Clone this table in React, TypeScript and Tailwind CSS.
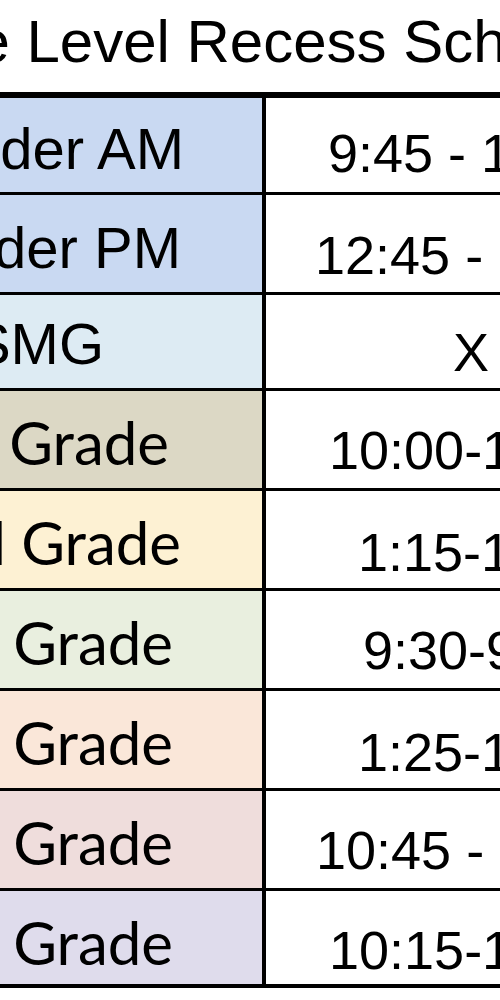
const rows = [
  { label: "Kinder AM", time: "9:45 - 10:05", bg: "bg-[#c9d9f2]", h: "h-[97px]", font: "sans", lpr: "pr-[78px]", lpt: "pt-[22px]", rpl: "pl-[62px]", rpt: "pt-[28px]" },
  { label: "Kinder PM", time: "12:45 - 1:05", bg: "bg-[#c9d9f2]", h: "h-[100px]", font: "sans", lpr: "pr-[81px]", lpt: "pt-[24px]", rpl: "pl-[49px]", rpt: "pt-[33px]" },
  { label: "SMG", time: "X", bg: "bg-[#ddebf3]", h: "h-[96px]", font: "sans", lpr: "pr-[158px]", lpt: "pt-[20px]", rpl: "pl-[187px]", rpt: "pt-[30px]" },
  { label: "1st Grade", time: "10:00-10:15", bg: "bg-[#dcd8c5]", h: "h-[100px]", font: "lato", lpr: "pr-[93px]", lpt: "pt-[21px]", rpl: "pl-[63px]", rpt: "pt-[32px]" },
  { label: "2nd Grade", time: "1:15-1:30", bg: "bg-[#fdf1d3]", h: "h-[100px]", font: "lato", lpr: "pr-[81px]", lpt: "pt-[21px]", rpl: "pl-[92px]", rpt: "pt-[34px]" },
  { label: "3rd Grade", time: "9:30-9:45", bg: "bg-[#e9efdf]", h: "h-[100px]", font: "lato", lpr: "pr-[89px]", lpt: "pt-[21px]", rpl: "pl-[97px]", rpt: "pt-[32px]" },
  { label: "4th Grade", time: "1:25-1:40", bg: "bg-[#fae7d9]", h: "h-[100px]", font: "lato", lpr: "pr-[89px]", lpt: "pt-[21px]", rpl: "pl-[92px]", rpt: "pt-[34px]" },
  { label: "5th Grade", time: "10:45 - 11:00", bg: "bg-[#efdddc]", h: "h-[100px]", font: "lato", lpr: "pr-[89px]", lpt: "pt-[21px]", rpl: "pl-[50px]", rpt: "pt-[32px]" },
  { label: "6th Grade", time: "10:15-10:30", bg: "bg-[#dfdcec]", h: "h-[97px]", font: "lato", lpr: "pr-[89px]", lpt: "pt-[21px]", rpl: "pl-[63px]", rpt: "pt-[32px]" },
]

export default function App() {
  return (
    <div className="w-[500px] h-[1000px] overflow-hidden bg-white text-black">
      {/* Title */}
      <div className="h-[92px] pt-[12px] whitespace-nowrap">
        <div className="ml-[-157px] text-[60px] leading-none font-['Liberation_Sans',Arial,sans-serif]">
          Grade Level Recess Schedule
        </div>
      </div>

      {/* Table */}
      <div className="border-t-[6px] border-black">
        {rows.map((r, i) => (
          <div
            key={r.label}
            className={`flex ${r.h} border-black ${i === rows.length - 1 ? "border-b-4" : "border-b-[3px]"}`}
          >
            <div
              className={`w-[266px] shrink-0 border-r-4 border-black ${r.bg} flex justify-end items-start overflow-hidden whitespace-nowrap ${r.lpr} ${r.lpt}`}
            >
              {r.font === "lato" ? (
                <span className="text-[60px] leading-none font-['Lato',sans-serif]">{r.label}</span>
              ) : (
                <span className="text-[58px] leading-none font-['Liberation_Sans',Arial,sans-serif]">{r.label}</span>
              )}
            </div>
            <div className={`flex-1 overflow-hidden whitespace-nowrap ${r.rpl} ${r.rpt}`}>
              <span className="text-[54px] leading-none font-['Liberation_Sans',Arial,sans-serif]">{r.time}</span>
            </div>
          </div>
        ))}
      </div>
    </div>
  )
}
